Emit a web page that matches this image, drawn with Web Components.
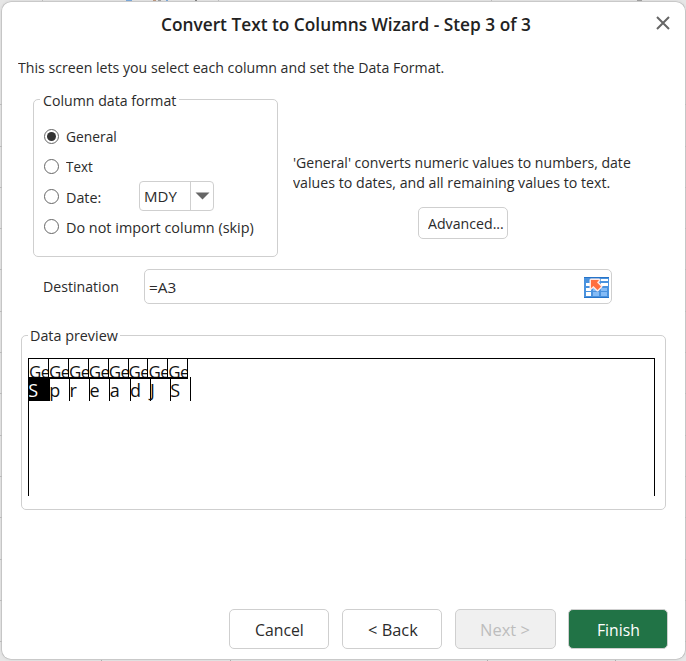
<!DOCTYPE html>
<html lang="en">
<head>
<meta charset="utf-8">
<title>Convert Text to Columns Wizard</title>
<style>
html,body{margin:0;height:100%;overflow:hidden}
body{font-family:"Open Sans","Noto Sans",sans-serif;color:#2b2b2b;font-size:15px;line-height:20px}
</style>
</head>
<body>
<wizard-page></wizard-page>
<script>
const define = (name, markup, setup) => {
  const t = document.createElement('template');
  t.innerHTML = markup;
  customElements.define(name, class extends HTMLElement {
    connectedCallback() {
      if (this.shadowRoot) return;
      this.attachShadow({mode: 'open'}).append(t.content.cloneNode(true));
      if (setup) setup(this, this.shadowRoot);
    }
  });
};

/* One line of text condensed or expanded to fill a given width. */
define('fit-text', `<style>:host{display:block;white-space:pre;width:var(--w)}span{display:inline-block;vertical-align:top;transform-origin:0 0}</style><span><slot></slot></span>`,
  (el, root) => {
    const w = +el.getAttribute('w'), s = root.querySelector('span');
    el.style.setProperty('--w', w + 'px');
    s.style.transform = `scaleX(${((w + .8) / s.getBoundingClientRect().width).toFixed(4)})`;
  });

define('group-box', `<style>
:host{display:block;box-sizing:border-box;border:1px solid #cfcfcf;border-radius:5px}
.legend{display:block;width:max-content;margin:var(--legend-top,-10px) 0 0 6px;padding:0 3px;background:#fff;height:20px}
</style><div class="legend"><slot name="legend"></slot></div><slot></slot>`);

define('radio-option', `<style>
:host{display:flex;height:30px;gap:7px}
i{box-sizing:border-box;width:15px;height:15px;border:1.3px solid #666;border-radius:50%;margin-top:.5px;display:grid;place-items:center;flex:none}
:host([checked]) i::after{content:"";width:9px;height:9px;border-radius:50%;background:#333}
div{margin-top:var(--drop,-2px)}
</style><i></i><div><slot></slot></div>`);

define('drop-select', `<style>
:host{display:flex;box-sizing:border-box;width:75px;height:30px;border:1px solid #cfcfcf;border-radius:4px}
div{width:46px;padding:4px 0 0 4px;border-right:1px solid #cfcfcf}
svg{margin:10px 0 0 4px}
</style><div><slot></slot></div><svg width="15" height="8"><path d="M.5 .5H14.5L7.5 7.5Z" fill="#666"/></svg>`);

define('push-button', `<style>
:host{display:flex;box-sizing:border-box;justify-content:center;align-items:center;width:100px;height:40px;border:1px solid #cfcfcf;border-radius:5px;background:#fff;font-size:16.5px;line-height:20px;flex:none;padding-top:2px}
:host([disabled]){background:#f0f0f0;color:#bdbdbd;width:101px;padding-right:2px}
:host([primary]){background:#217346;color:#fff;margin-left:-1px}
:host([small]){width:90px;height:32px;font-size:15px;padding:0 0 0 4px}
slot{display:block}
</style><slot></slot>`);

define('range-field', `<style>
:host{display:flex;box-sizing:border-box;width:468px;height:35px;border:1px solid #cfcfcf;border-radius:5px;justify-content:space-between;padding:7px 2px 0 4px}
</style><slot></slot>
<svg width="25" height="21" viewBox="0 0 25 21" style="flex:none"><path fill="#4a92de" d="M0 0H25V21H0Z"/><path fill="#2673c8" d="M0 0H25V1H0ZM0 20H25V21H0Z"/>
<path fill="#84bbf6" d="M9 6H15V9H9ZM9 11H15V14H9ZM9 15H15V19H9ZM17 11H23V14H17ZM17 15H23V19H17Z"/>
<path fill="#fff" d="M2 6H7V9H2ZM2 11H7V14H2ZM2 15H7V19H2ZM17 2H24V4H17ZM17 6H24V9H17Z"/>
<path fill="#ff6e40" stroke="#ffe9e4" stroke-width="3" stroke-linejoin="round" paint-order="stroke" d="M7 3H15L13 5.4L17 9.5L13.5 13L9.4 9L7 11.2Z"/></svg>`);

define('data-preview', `<style>
:host{display:block;box-sizing:border-box;width:627px;height:138px;border:1px solid #000;border-bottom:0;font-size:17px;line-height:24px;overflow:hidden;color:#111}
.row{display:flex}
.h span{box-sizing:border-box;width:19.9px;height:20px;overflow:hidden;border-right:1px solid #000;border-bottom:2px solid #000;padding-top:1px;letter-spacing:-.6px}
.h span:first-child{width:20px}
.d{margin-top:-2px;font-size:18px}
.d span{box-sizing:border-box;width:20.15px;height:24px;border-left:1px solid #000;padding-top:1px;text-indent:-.7px}
.d span:first-child{background:#000;color:#fff;border:0;width:20px}
.d span:last-child{width:1px}
</style><div class="row h"></div><div class="row d"></div>`, (el, root) => {
  const letters = [...el.getAttribute('text')];
  root.querySelector('.h').innerHTML = letters.map(() => '<span>Ge</span>').join('');
  root.querySelector('.d').innerHTML = letters.map(c => `<span>${c}</span>`).join('') + '<span></span>';
});

define('wizard-dialog', `<style>
:host{display:block;box-sizing:border-box;width:683px;height:657px;background:#fff;border-radius:9px;box-shadow:0 0 0 .6px #bbb,0 0 3px #bbb}
header{display:flex;height:46px;justify-content:space-between;box-sizing:border-box;padding:12px 15px 0 159px;font-size:17.5px;font-weight:600;color:#222}
header svg{margin-top:2px}
.intro{padding:9px 0 0 16px;height:42px;box-sizing:border-box}
.format{display:flex;height:170px;padding:9px 0 0 31px;gap:15px;box-sizing:border-box}
.format group-box{width:245px;height:158px}
.options{padding:18px 0 0 10px;display:block}
.date{display:flex;gap:38px}
.help{padding-top:53px}
.help push-button{margin:15px 0 0 125px}
.dest{display:flex;gap:25px;padding:9px 0 0 41px;height:75px;box-sizing:border-box}
.dest>fit-text{margin-top:7px}
.preview{width:645px;height:175px;margin:0 0 0 19px;--legend-top:-11px}
.preview fit-text{margin-left:-1px}
.preview data-preview{margin:13px 0 0 6px}
footer{display:flex;gap:13px;margin:99px 0 0 227px}
</style>
<header><fit-text w="369">Convert Text to Columns Wizard - Step 3 of 3</fit-text>
<svg width="14" height="14"><path d="M1 1L13 13M13 1L1 13" stroke="#666" stroke-width="2"/></svg></header>
<div class="intro"><fit-text w="425.5">This screen lets you select each column and set the Data Format.</fit-text></div>
<section class="format"><group-box><fit-text slot="legend" w="132.5">Column data format</fit-text>
<div class="options">
<radio-option checked><fit-text w="50">General</fit-text></radio-option>
<radio-option><fit-text w="26">Text</fit-text></radio-option>
<div class="date"><radio-option style="--drop:-1px"><fit-text w="34.5">Date:</fit-text></radio-option><drop-select style="margin-top:-7px"><fit-text w="32">MDY</fit-text></drop-select></div>
<radio-option style="--drop:-1px"><fit-text w="187">Do not import column (skip)</fit-text></radio-option>
</div></group-box>
<div class="help"><fit-text w="337">'General' converts numeric values to numbers, date</fit-text><fit-text w="316.5">values to dates, and all remaining values to text.</fit-text>
<push-button small><fit-text w="75">Advanced...</fit-text></push-button></div></section>
<section class="dest"><fit-text w="75" style="margin-right:1px">Destination</fit-text><range-field><fit-text w="26.5">=A3</fit-text></range-field></section>
<group-box class="preview"><fit-text slot="legend" w="87">Data preview</fit-text><data-preview text="SpreadJS"></data-preview></group-box>
<footer><push-button><fit-text w="48">Cancel</fit-text></push-button><push-button><fit-text w="49">&lt; Back</fit-text></push-button><push-button disabled><fit-text w="49">Next &gt;</fit-text></push-button><push-button primary><fit-text w="42">Finish</fit-text></push-button></footer>`);

define('wizard-page', `<style>
:host{display:block;box-sizing:border-box;width:686px;height:661px;padding:2px 0 0 2px;background:
linear-gradient(90deg,transparent 42px,#bbb 42px 43px,transparent 43px 126px,#6fa3dc 126px 132px,transparent 132px 153px,#b98e72 153px 156px,transparent 156px 158px,#999 158px 161px,transparent 161px 166px,#6fa3dc 166px 168px,transparent 168px 195px,#777 195px 197px,transparent 197px 218px,#bbb 218px 219px,transparent 219px 491px,#bbb 491px 492px,transparent 492px 637px,#999 637px 642px,transparent 642px) 0 0/686px 1px no-repeat,
repeating-linear-gradient(180deg,transparent 0 40.3px,#bbb 40.3px 41.3px) 0 64px/686px 594px no-repeat,
repeating-linear-gradient(90deg,transparent 0 127.5px,#aaa 127.5px 128.5px) -26px 660px/712px 1px no-repeat,#e6e6e6}
</style><wizard-dialog></wizard-dialog>`);
</script>
</body>
</html>
